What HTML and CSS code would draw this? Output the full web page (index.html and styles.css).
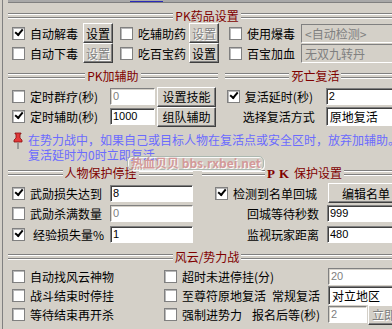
FILE: index.html
```html
<!DOCTYPE html>
<html lang="zh">
<head>
    <meta charset="UTF-8">
    <title>PK设置</title>
    <link rel="stylesheet" href="styles.css">
</head>
<body>
    <div class="window">
        <div class="topbar"><span class="topbar-tab"></span></div>

        <!-- PK药品设置 -->
        <div class="hd"><span class="ln"></span><span class="hd-title">PK药品设置</span><span class="ln"></span></div>
        <div class="drug-row">
            <label class="opt c1"><span class="cb on"></span>自动解毒</label>
            <span class="btn w30">设置</span>
            <label class="opt c2"><span class="cb"></span>吃辅助药</label>
            <span class="btn w30 off">设置</span>
            <label class="opt c3"><span class="cb"></span>使用爆毒</label>
            <span class="combo off w100">&lt;自动检测&gt;</span>
        </div>
        <div class="drug-row">
            <label class="opt c1"><span class="cb"></span>自动下毒</label>
            <span class="btn w30 off">设置</span>
            <label class="opt c2"><span class="cb"></span>吃百宝药</label>
            <span class="btn w30">设置</span>
            <label class="opt c3"><span class="cb"></span>百宝加血</label>
            <span class="combo off w100">无双九转丹</span>
        </div>

        <!-- PK加辅助 / 死亡复活 -->
        <div class="split split-buff">
            <div class="col col-buff">
                <div class="hd"><span class="ln"></span><span class="hd-title">PK加辅助</span><span class="ln"></span></div>
                <div class="row row-c">
                    <label class="opt w98"><span class="cb"></span>定时群疗(秒)</label>
                    <span class="edit off w45">0</span>
                    <span class="btn w59">设置技能</span>
                </div>
                <div class="row row-d">
                    <label class="opt w98"><span class="cb on"></span>定时辅助(秒)</label>
                    <span class="edit w45">1000</span>
                    <span class="btn w59">组队辅助</span>
                </div>
            </div>
            <div class="col col-revive">
                <div class="hd"><span class="ln"></span><span class="hd-title">死亡复活</span><span class="ln"></span></div>
                <div class="row row-c">
                    <label class="opt w99"><span class="cb on"></span>复活延时(秒)</label>
                    <span class="edit w80">2</span>
                </div>
                <div class="row row-d">
                    <span class="field-label">选择复活方式</span>
                    <span class="combo w80">原地复活</span>
                </div>
            </div>
        </div>

        <div class="tip">
            <svg class="pin" width="12" height="18" viewBox="0 0 12 18">
                <path d="M3 1h6v1H8v4l2 2v2H2V8l2-2V2H3z" fill="#e23a3a" stroke="#8a1010" stroke-width="0.8"/>
                <path d="M6 10.5V17" stroke="#8c8c8c" stroke-width="1.6"/>
            </svg>
            <p>在势力战中，如果自己或目标人物在复活点或安全区时，放弃加辅助。<br>复活延时为0时立即复活。</p>
        </div>

        <!-- 人物保护停挂 / PK保护设置 -->
        <div class="split split-guard">
            <div class="col col-guard">
                <div class="hd"><span class="ln"></span><span class="hd-title">人物保护停挂</span><span class="ln"></span></div>
                <div class="row row-e">
                    <label class="opt w98"><span class="cb on"></span>武勋损失达到</label>
                    <span class="edit w83">8</span>
                </div>
                <div class="row row-f">
                    <label class="opt w98"><span class="cb"></span>武勋杀满数量</label>
                    <span class="edit off w83">0</span>
                </div>
                <div class="row row-g">
                    <label class="opt w98"><span class="cb on"></span><span class="lbl-in">经验损失量%</span></label>
                    <span class="edit w83">1</span>
                </div>
            </div>
            <div class="col col-pk">
                <div class="hd"><span class="ln"></span><span class="hd-title"><b class="pk">PK</b>保护设置</span><span class="ln"></span></div>
                <div class="row row-e">
                    <label class="opt w113"><span class="cb on"></span>检测到名单回城</label>
                    <span class="btn w76">编辑名单</span>
                </div>
                <div class="row row-f">
                    <span class="num-label">回城等待秒数</span>
                    <span class="edit w80">999</span>
                </div>
                <div class="row row-g">
                    <span class="num-label">监视玩家距离</span>
                    <span class="edit w80">480</span>
                </div>
            </div>
        </div>

        <!-- 风云/势力战 -->
        <div class="hd hd-war"><span class="ln"></span><span class="hd-title">风云/势力战</span><span class="ln"></span></div>
        <div class="row war-row row-h">
            <label class="opt w152"><span class="cb"></span>自动找风云神物</label>
            <label class="opt w164"><span class="cb"></span>超时未进停挂(分)</label>
            <span class="edit off w80">20</span>
        </div>
        <div class="row war-row row-i">
            <label class="opt w152"><span class="cb"></span>战斗结束时停挂</label>
            <label class="opt w164"><span class="cb"></span>至尊符原地复活<span class="aside">常规复活</span></label>
            <span class="combo w80">对立地区</span>
        </div>
        <div class="row war-row row-j">
            <label class="opt w152"><span class="cb"></span>等待结束再开杀</label>
            <label class="opt w164"><span class="cb"></span>强制进势力<span class="aside">报名后等(秒)</span></label>
            <span class="edit off w39">2</span>
            <span class="btn off w50 btn-left">立即报名</span>
        </div>

        <div class="watermark">热血贝贝 bbs.rxbei.net</div>
    </div>
</body>
</html>
```

FILE: styles.css
```css
* {
    margin: 0;
    padding: 0;
    box-sizing: border-box;
}

body {
    width: 392px;
    height: 329px;
    overflow: hidden;
    background: #d4d0c8;
    color: #000;
    font-family: "Noto Sans CJK SC", sans-serif;
    font-size: 12px;
    line-height: 15px;
}

.window {
    position: relative;
    width: 404px;
    height: 329px;
    margin-left: 2px;
    border-left: 1px solid #808080;
    padding-left: 5px;
}

.topbar {
    display: flex;
    align-items: flex-end;
    height: 3px;
    background: #a8a8a8;
    border-bottom: 1px solid #808080;
}

.topbar-tab {
    margin-left: 122px;
    width: 33px;
    height: 1px;
    background: #2a2ab8;
}

/* group title with double rule */
.hd {
    display: flex;
    align-items: center;
    height: 14px;
    margin-top: 6px;
}

.ln {
    flex: 1;
    height: 6px;
    background: linear-gradient(#808080 0 1px, #fff 1px 2px, transparent 2px 4px, #808080 4px 5px, #fff 5px 6px);
}

.hd-title {
    color: #800000;
    padding: 0 2px;
    line-height: 14px;
    white-space: nowrap;
}

.pk {
    font-family: "Liberation Serif", serif;
    font-size: 13px;
    letter-spacing: 4px;
    margin-right: 1px;
}

/* controls */
.opt {
    display: flex;
    align-items: center;
    gap: 5px;
    flex: none;
    white-space: nowrap;
}

.cb {
    position: relative;
    flex: none;
    width: 13px;
    height: 13px;
    background: #fff;
    border: 1px solid #808080;
    box-shadow: inset 1px 1px 0 #b8b8b8;
}

.cb.on::after {
    content: '';
    position: absolute;
    left: 2px;
    top: 1px;
    width: 6px;
    height: 3px;
    border-left: 2px solid #000;
    border-bottom: 2px solid #000;
    transform: rotate(-50deg);
}

.btn {
    display: flex;
    align-items: center;
    justify-content: center;
    flex: none;
    height: 20px;
    border: 1px solid;
    border-color: #fff #404040 #404040 #fff;
    box-shadow: inset -1px -1px 0 #808080;
    white-space: nowrap;
    overflow: hidden;
}

.btn.off {
    color: #808080;
    text-shadow: 1px 1px 0 #fff;
}

.btn-left {
    justify-content: flex-start;
    padding-left: 3px;
    margin-left: 1px;
}

.edit {
    flex: none;
    height: 17px;
    padding: 1px 0 0 2px;
    background: #fff;
    border: 1px solid;
    border-color: #808080 #fff #fff #808080;
    box-shadow: inset 1px 1px 0 #404040;
    font-family: "Liberation Sans", sans-serif;
    font-size: 11px;
    line-height: 13px;
}

.edit.off {
    color: #808080;
    box-shadow: inset 1px 1px 0 #d4d0c8;
}

.combo {
    display: flex;
    align-items: center;
    flex: none;
    height: 19px;
    padding-left: 3px;
    background: #fff;
    border: 1px solid;
    border-color: #808080 #fff #fff #808080;
    box-shadow: inset 1px 1px 0 #404040;
    white-space: nowrap;
}

.combo.off {
    background: transparent;
    color: #808080;
    box-shadow: inset 1px 1px 0 #d4d0c8;
}

.w30 { width: 30px; }
.w39 { width: 39px; }
.w45 { width: 45px; }
.w50 { width: 50px; }
.w59 { width: 59px; margin-left: 2px; }
.w76 { width: 76px; }
.w80 { width: 80px; }
.w83 { width: 83px; }
.w98 { width: 98px; }
.w99 { width: 99px; }
.w100 { width: 100px; }
.w113 { width: 113px; }
.w152 { width: 152px; }
.w164 { width: 164px; }

/* PK药品设置 */
.drug-row {
    display: flex;
    align-items: center;
    height: 20px;
    padding-left: 4px;
}

.opt.c1 { width: 71px; }
.opt.c2 { width: 69px; margin-left: 7px; }
.opt.c3 { width: 72px; margin-left: 10px; }

/* two-column blocks */
.split {
    display: flex;
}

.split-buff { gap: 7px; }
.col-buff { width: 212px; }
.col-revive { width: 183px; }

.split-guard { gap: 9px; margin-top: -2px; }
.col-guard { width: 186px; }
.col-pk { width: 206px; }

.row {
    display: flex;
    align-items: center;
    height: 19px;
}

.col-buff .row,
.col-guard .row,
.war-row {
    padding-left: 4px;
}

.col-revive .row { padding-left: 2px; }
.col-pk .row-e { padding-left: 13px; }

.row-c { margin-top: 4px; }
.row-d { margin-top: 1px; }
.row-e { margin-top: 3px; height: 20px; }
.row-f { margin-top: 1px; }
.row-g { margin-top: 2px; }

.field-label {
    width: 99px;
    padding-left: 16px;
    flex: none;
}

.num-label {
    width: 117px;
    margin-right: 8px;
    text-align: right;
    flex: none;
}

.lbl-in { margin-left: 3px; }

/* tip */
.tip {
    display: flex;
    gap: 4px;
    margin-top: 6px;
    padding-left: 4px;
    color: #6b6bff;
    white-space: nowrap;
}

.pin { flex: none; }

/* 风云/势力战 */
.row-h { margin-top: 3px; height: 18px; }
.row-i { margin-top: 1px; }

.aside {
    margin-left: auto;
    padding-right: 8px;
}

.watermark {
    position: absolute;
    left: 124px;
    top: 156px;
    width: 137px;
    height: 14px;
    padding-left: 3px;
    border: 1px solid #a8b6ae;
    border-radius: 5px;
    box-shadow: 1px 1px 0 #fff, inset 1px 1px 0 #fff;
    color: #d49494;
    font-family: "Noto Sans CJK SC", sans-serif;
    font-weight: bold;
    font-size: 12px;
    line-height: 12px;
    white-space: nowrap;
    text-shadow: 1px 1px 0 #fff;
    opacity: 0.9;
}
```
